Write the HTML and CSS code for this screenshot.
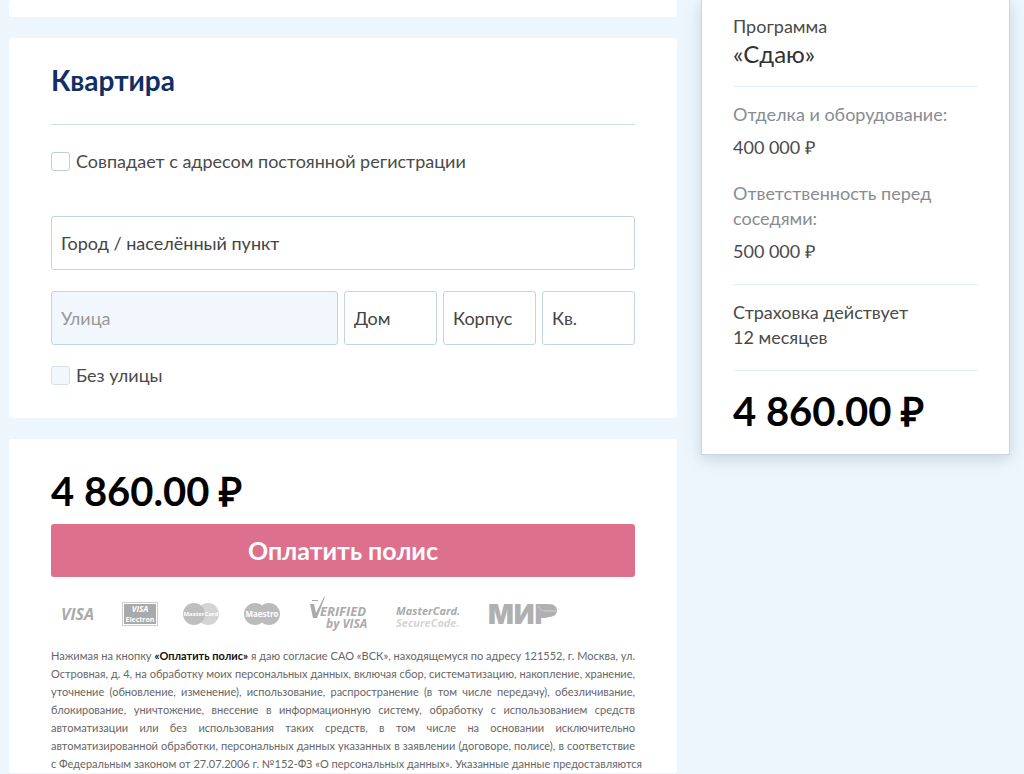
FILE: index.html
```html
<!DOCTYPE html>
<html lang="ru">
<head>
    <meta charset="UTF-8">
    <meta name="viewport" content="width=device-width, initial-scale=1.0">
    <title>Оплата полиса</title>
    <link rel="stylesheet" href="styles.css">
</head>
<body>
    <div class="page">
        <main class="content">
            <section class="card card-prev"></section>

            <form class="card card-address">
                <h2>Квартира</h2>
                <label class="check">
                    <input type="checkbox" name="same_address">
                    <span>Совпадает с адресом постоянной регистрации</span>
                </label>
                <input class="field field-city" type="text" name="city" placeholder="Город / населённый пункт" aria-label="Город / населённый пункт">
                <div class="field-row">
                    <input class="field field-street" type="text" name="street" placeholder="Улица" aria-label="Улица" disabled>
                    <input class="field" type="text" name="house" placeholder="Дом" aria-label="Дом">
                    <input class="field" type="text" name="building" placeholder="Корпус" aria-label="Корпус">
                    <input class="field" type="text" name="flat" placeholder="Кв." aria-label="Квартира">
                </div>
                <label class="check">
                    <input type="checkbox" name="no_street" disabled>
                    <span>Без улицы</span>
                </label>
            </form>

            <section class="card card-pay">
                <p class="price">4 860.00 ₽</p>
                <button class="pay-btn" type="button">Оплатить полис</button>
                <div class="logos">
                    <svg width="36" height="36" viewBox="0 0 36 36">
                        <text x="0" y="24" class="logo-text" font-size="16">VISA</text>
                    </svg>
                    <svg width="36" height="36" viewBox="0 0 36 36">
                        <rect x="0.5" y="6.5" width="35" height="23" fill="#fff" stroke="#ccc"/>
                        <rect x="2" y="8" width="32" height="20" fill="#aaa"/>
                        <text x="18" y="16" class="logo-white" font-size="8" font-style="italic">VISA</text>
                        <text x="18" y="26" class="logo-white" font-size="7">Electron</text>
                    </svg>
                    <svg width="36" height="36" viewBox="0 0 36 36">
                        <circle cx="25" cy="18" r="11" fill="#d4d4d4"/>
                        <circle cx="11" cy="18" r="11" fill="#bebebe"/>
                        <text x="18" y="20" class="logo-white" font-size="6">MasterCard</text>
                    </svg>
                    <svg width="36" height="36" viewBox="0 0 36 36">
                        <circle cx="11" cy="18" r="11" fill="#bbb"/>
                        <circle cx="25" cy="18" r="11" fill="#bbb"/>
                        <text x="18" y="21" class="logo-white" font-size="8">Maestro</text>
                    </svg>
                    <svg class="logo-verified" width="60" height="36" viewBox="0 0 60 36">
                        <path d="M1 8 H5 L7 17 L15 1 L16 1 L8 22 H4 Z M3 4 H9 V5 H3 Z" fill="#aaa"/>
                        <text x="11" y="20" class="logo-text" font-size="13">ERIFIED</text>
                        <text x="17" y="32" class="logo-text" font-size="12">by VISA</text>
                    </svg>
                    <svg width="68" height="36" viewBox="0 0 68 36">
                        <text x="2" y="19" class="logo-text" font-size="11">MasterCard.</text>
                        <text x="2" y="31" class="logo-text logo-light" font-size="11">SecureCode.</text>
                    </svg>
                    <svg width="72" height="36" viewBox="0 0 72 36">
                        <text x="1" y="28" class="logo-mir" font-size="27">МИР</text>
                        <path d="M51 8 H62 C67 8 70 11 70 14 C70 19 66 21 62 21 H54 V15 Z" fill="#b0b0b0"/>
                        <path d="M51 10 C53 14 56 15 59 15 H70" fill="none" stroke="#d2d2d2"/>
                    </svg>
                </div>
                <p class="legal">
                    Нажимая на кнопку <b>«Оплатить полис»</b> я даю согласие САО «ВСК», находящемуся по адресу 121552, г. Москва, ул.<br>
                    Островная, д. 4, на обработку моих персональных данных, включая сбор, систематизацию, накопление, хранение,<br>
                    уточнение (обновление, изменение), использование, распространение (в том числе передачу), обезличивание,<br>
                    блокирование, уничтожение, внесение в информационную систему, обработку с использованием средств<br>
                    автоматизации или без использования таких средств, в том числе на основании исключительно<br>
                    автоматизированной обработки, персональных данных указанных в заявлении (договоре, полисе), в соответствие<br>
                    с Федеральным законом от 27.07.2006 г. №152-ФЗ «О персональных данных». Указанные данные предоставляются
                </p>
            </section>
        </main>

        <aside class="summary">
            <div class="summary-block">
                <p>Программа</p>
                <p class="program">«Сдаю»</p>
            </div>
            <dl class="summary-block risks">
                <dt>Отделка и оборудование:</dt>
                <dd>400 000 ₽</dd>
                <dt>Ответственность перед соседями:</dt>
                <dd>500 000 ₽</dd>
            </dl>
            <div class="summary-block period">
                <p>Страховка действует</p>
                <p>12 месяцев</p>
            </div>
            <p class="price">4 860.00 ₽</p>
        </aside>
    </div>
</body>
</html>
```

FILE: styles.css
```css
* {
    box-sizing: border-box;
}
body {
    margin: 0;
    background-color: #eef6fd;
    color: #4a4a4a;
    font-family: Lato, "Open Sans", sans-serif;
    font-size: 18px;
    line-height: 25px;
}
h2, p, dl, dd {
    margin: 0;
}
.page {
    display: grid;
    grid-template-columns: minmax(0, 1fr) 309px;
    gap: 24px;
    align-items: start;
    padding: 0 14px 0 9px;
}
.content {
    display: flex;
    flex-direction: column;
    gap: 21px;
}
.card {
    background: #fff;
    border-radius: 3px;
    padding: 0 42px;
}
.card-prev {
    height: 17px;
}
.card-address {
    padding-top: 24px;
    padding-bottom: 30px;
}
.card-address h2 {
    padding-bottom: 26px;
    margin-bottom: 24px;
    border-bottom: 1px solid #cfe0e8;
    color: #0f2f66;
    font-size: 28px;
    line-height: 36px;
}
.check {
    display: flex;
    align-items: center;
    gap: 6px;
}
.check input {
    appearance: none;
    width: 19px;
    height: 19px;
    margin: 0;
    background: #fff;
    border: 1px solid #b9cfdb;
    border-radius: 3px;
}
.check input:disabled {
    background: #f1f7fc;
    border-color: #d3e3ec;
}
.field {
    width: 100%;
    min-width: 0;
    height: 54px;
    padding: 0 9px;
    background: #fff;
    border: 1px solid #bfd8e0;
    border-radius: 3px;
    font: inherit;
}
.field::placeholder {
    color: #444;
    opacity: 1;
}
.field:disabled {
    background: #f1f7fc;
}
.field:disabled::placeholder {
    color: #999;
}
.field-city {
    display: block;
    margin: 42px 0 21px;
}
.field-row {
    display: grid;
    grid-template-columns: minmax(0, 1fr) 93px 93px 93px;
    gap: 6px;
    margin-bottom: 18px;
}
.price {
    color: #000;
    font-size: 40px;
    font-weight: bold;
    line-height: 50px;
}
.card-pay {
    padding-top: 27px;
}
.pay-btn {
    display: block;
    width: 100%;
    height: 53px;
    margin-top: 8px;
    background: #dd718d;
    border: none;
    border-radius: 3px;
    color: #fff;
    font: inherit;
    font-size: 25px;
    font-weight: bold;
    cursor: pointer;
}
.logos {
    display: flex;
    gap: 25px;
    margin: 19px 0 15px 10px;
}
.logo-verified {
    margin-left: 4px;
}
.logo-text {
    fill: #aaa;
    font-family: "Open Sans", sans-serif;
    font-style: italic;
    font-weight: bold;
}
.logo-light {
    fill: #d4d4d4;
}
.logo-white {
    fill: #fff;
    font-family: "Open Sans", sans-serif;
    font-weight: bold;
    text-anchor: middle;
}
.logo-mir {
    fill: #b0b0b0;
    font-family: Inter, sans-serif;
    font-weight: 900;
}
.legal {
    color: #666;
    font-size: 11px;
    line-height: 18px;
    text-align: justify;
    text-align-last: justify;
    white-space: nowrap;
}
.legal b {
    color: #111;
}
.summary {
    padding: 14px 31px 18px;
    background: #fff;
    border: 1px solid #c9d5df;
    border-top: none;
    box-shadow: 0 4px 14px rgba(60, 90, 120, 0.22);
}
.summary-block {
    margin-bottom: 15px;
    padding-bottom: 20px;
    border-bottom: 1px solid #e3eff5;
}
.program {
    margin-top: 2px;
    color: #333;
    font-size: 24px;
}
.risks dt {
    color: #888c91;
}
.risks dd {
    margin-top: 8px;
}
.risks dd + dt {
    margin-top: 21px;
}
```
